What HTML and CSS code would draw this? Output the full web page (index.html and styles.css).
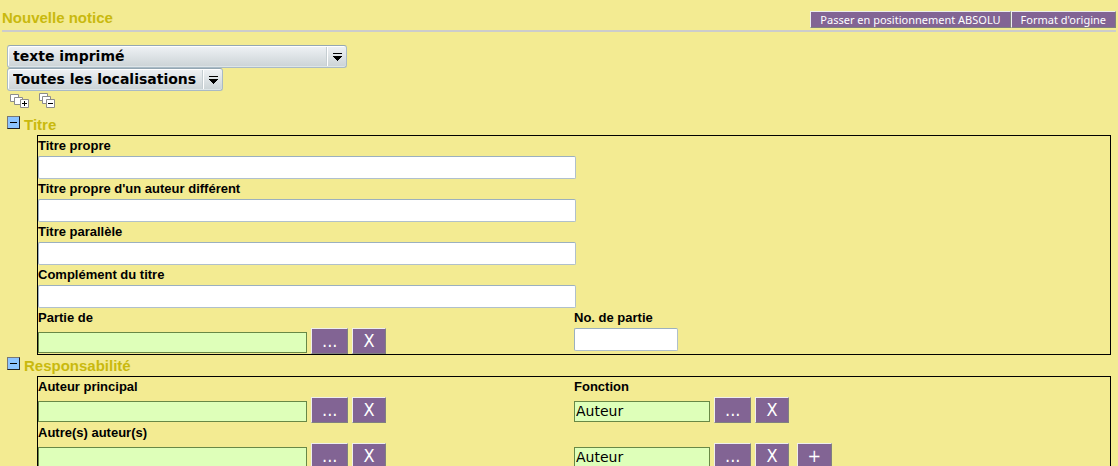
FILE: index.html
```html
<!DOCTYPE html>
<html lang="fr">
<head>
<meta charset="utf-8">
<title>Nouvelle notice</title>
<link rel="stylesheet" href="styles.css">
</head>
<body>
<header class="top">
  <h1 class="heading">Nouvelle notice</h1>
  <div class="top-actions">
    <button type="button" class="btn btn-small">Passer en positionnement ABSOLU</button>
    <button type="button" class="btn btn-small">Format d'origine</button>
  </div>
</header>
<form class="form">
  <div class="select select-wide">
    <select aria-label="Type de document"><option>texte imprimé</option></select>
    <svg class="arrow" viewBox="0 0 9 8" shape-rendering="crispEdges" aria-hidden="true"><path d="M0 0H9V1H0ZM0 3H9V4H8V5H7V6H6V7H5V8H4V7H3V6H2V5H1V4H0Z"/></svg>
  </div>
  <div class="select select-narrow">
    <select aria-label="Localisation"><option>Toutes les localisations</option></select>
    <svg class="arrow" viewBox="0 0 9 8" shape-rendering="crispEdges" aria-hidden="true"><path d="M0 0H9V1H0ZM0 3H9V4H8V5H7V6H6V7H5V8H4V7H3V6H2V5H1V4H0Z"/></svg>
  </div>
  <div class="tools">
    <button type="button" class="tool" aria-label="Tout déplier">
      <svg width="20" height="15" viewBox="0 0 20 15" fill="#fff" stroke="#8c8c8c"><path d="M.5 1.500h8v7h-8z"/><path d="M4.500 4.500h8v7h-8z"/><path d="M10.500 6.500h8v8h-8z"/><path d="M12 10.500h5M14.500 8v5" stroke="#000"/></svg>
    </button>
    <button type="button" class="tool" aria-label="Tout replier">
      <svg width="17" height="15" viewBox="0 0 17 15" fill="#fff" stroke="#8c8c8c"><path d="M.5.5h8v7h-8z"/><path d="M3.500 3.500h8v7h-8z"/><path d="M7.500 6.500h8v8h-8z"/><path d="M9 10.500h5" stroke="#000"/></svg>
    </button>
  </div>

  <section>
    <div class="section-head">
      <button type="button" class="toggle" aria-label="Replier Titre"></button>
      <h2 class="heading">Titre</h2>
    </div>
    <div class="panel">
      <div class="field"><label for="t1">Titre propre</label><input id="t1" class="text text-half" type="text"></div>
      <div class="field"><label for="t2">Titre propre d'un auteur différent</label><input id="t2" class="text text-half" type="text"></div>
      <div class="field"><label for="t3">Titre parallèle</label><input id="t3" class="text text-half" type="text"></div>
      <div class="field"><label for="t4">Complément du titre</label><input id="t4" class="text text-half" type="text"></div>
      <div class="columns">
        <div class="field">
          <label for="part">Partie de</label>
          <div class="picker"><input id="part" class="lookup" type="text"><button type="button" class="btn">...</button><button type="button" class="btn">X</button></div>
        </div>
        <div class="field"><label for="num">No. de partie</label><input id="num" class="text text-short" type="text"></div>
      </div>
    </div>
  </section>

  <section>
    <div class="section-head">
      <button type="button" class="toggle" aria-label="Replier Responsabilité"></button>
      <h2 class="heading">Responsabilité</h2>
    </div>
    <div class="panel">
      <div class="columns">
        <div class="field">
          <label for="a1">Auteur principal</label>
          <div class="picker"><input id="a1" class="lookup" type="text"><button type="button" class="btn">...</button><button type="button" class="btn">X</button></div>
        </div>
        <div class="field">
          <label for="f1">Fonction</label>
          <div class="picker"><input id="f1" class="lookup lookup-short" type="text" value="Auteur"><button type="button" class="btn">...</button><button type="button" class="btn">X</button></div>
        </div>
      </div>
      <div class="columns">
        <div class="field">
          <label for="a2">Autre(s) auteur(s)</label>
          <div class="picker"><input id="a2" class="lookup" type="text"><button type="button" class="btn">...</button><button type="button" class="btn">X</button></div>
        </div>
        <div class="field field-end">
          <div class="picker"><input class="lookup lookup-short" type="text" value="Auteur" aria-label="Fonction de l'autre auteur"><button type="button" class="btn">...</button><button type="button" class="btn">X</button><button type="button" class="btn btn-add">+</button></div>
        </div>
      </div>
    </div>
  </section>
</form>
</body>
</html>
```
FILE: styles.css
```css
* { box-sizing: border-box; }

body {
  margin: 0;
  background: #f3eb92;
  color: #000;
  font-family: "Liberation Sans", Arial, sans-serif;
  font-size: 13px;
}

button, input, select { margin: 0; font-family: "DejaVu Sans", sans-serif; }

.heading { margin: 0; color: #c9b90e; font-size: 15px; line-height: 21px; font-weight: bold; }

.top {
  display: flex;
  align-items: flex-end;
  justify-content: space-between;
  margin: 0 2px;
  padding: 7px 0 2px;
  border-bottom: 2px solid #ccc;
}
.top-actions { display: flex; padding-top: 4px; }

.btn {
  border: 1px solid;
  border-color: #eee #808080 #808080 #eee;
  background: #826494;
  color: #fff;
  font-family: "DejaVu Sans Condensed", "DejaVu Sans", sans-serif;
  font-size: 18px;
  line-height: 24px;
  padding: 0 10px;
}
.btn-small { font-family: "Noto Sans", sans-serif; font-size: 11px; line-height: 15px; padding: 0 9px; }

.form { padding: 13px 7px 0; }

.select {
  display: grid;
  grid-template-columns: 1fr 20px;
  align-items: center;
  height: 23px;
}
.select-wide { width: 340px; }
.select-narrow { width: 216px; }
.select select {
  grid-area: 1 / 1 / 2 / 3;
  width: 100%;
  height: 23px;
  padding: 0 5px 2px;
  appearance: none;
  border: 1px solid #a9bac5;
  border-top-color: #94a7b3;
  border-radius: 3px;
  background: linear-gradient(#eff2f5, #cbd3d6);
  box-shadow: inset 1px 1px #fff, inset 0 -1px #dde5e8;
  color: #000;
  font-size: 14px;
  font-weight: bold;
}
.arrow {
  grid-area: 1 / 2;
  width: 19px;
  height: 19px;
  padding: 6px 4px 5px 5px;
  border-left: 1px solid #fff;
  box-shadow: -1px 0 #c5ced2;
  pointer-events: none;
}

.tools { display: flex; gap: 9px; height: 23px; padding: 2px 3px; }
.tool { display: block; border: 0; padding: 0; background: none; height: 15px; }
.tool svg { display: block; }

.section-head { display: flex; align-items: center; gap: 4px; height: 21px; }
.section-head .toggle {
  display: flex;
  align-items: center;
  justify-content: center;
  width: 13px;
  height: 13px;
  margin-bottom: 4px;
  padding: 0;
  border: 1px solid;
  border-color: #777 #222 #222 #777;
  background: #8cc4ff;
}
.toggle::before { content: ""; width: 7px; height: 1px; background: #000; }

.panel { margin-left: 30px; border: 1px solid #000; }
.columns { display: grid; grid-template-columns: 1fr 1fr; }
.field { display: flex; flex-direction: column; align-items: flex-start; }
.field-end { justify-content: flex-end; }
label { font-size: 13px; line-height: 20px; font-weight: bold; }

input { border: 1px solid; padding: 0 1px; font-size: 14px; color: #000; }
.text { height: 23px; border-color: #9bb0bf #b0c0cc #b0c0cc #9bb0bf; border-radius: 2px; background: #fff; }
.text-half { width: calc(50% + 2px); }
.text-short { width: 104px; }

.picker { display: flex; align-items: flex-start; gap: 4px; width: 100%; height: 26px; }
.lookup { width: calc(50% + 1px); height: 21px; margin-top: 4px; padding: 0 1px 2px; border-color: #688846; background: #deffb9; }
.lookup-short { width: calc(25% + 2px); }
.btn-add { margin-left: 4px; }
```
